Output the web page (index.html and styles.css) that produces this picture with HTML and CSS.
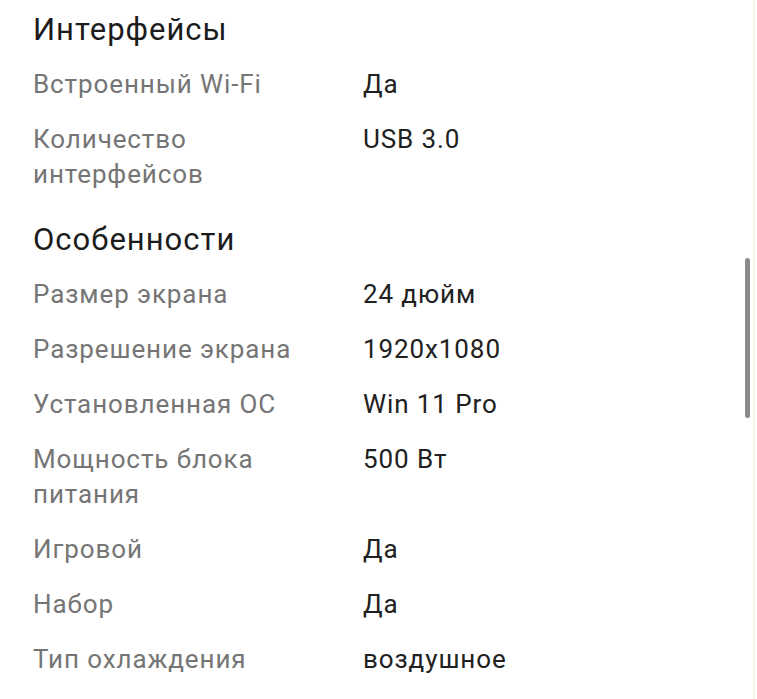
FILE: index.html
```html
<!DOCTYPE html>
<html lang="ru">
<head>
<meta charset="utf-8">
<link rel="stylesheet" href="styles.css">
</head>
<body>
<div class="page">
  <section class="group first">
    <h2 class="title">Интерфейсы</h2>
    <div class="row"><div class="label">Встроенный Wi-Fi</div><div class="value">Да</div></div>
    <div class="row"><div class="label">Количество<br>интерфейсов</div><div class="value">USB 3.0</div></div>
  </section>
  <section class="group">
    <h2 class="title">Особенности</h2>
    <div class="row"><div class="label">Размер экрана</div><div class="value">24 дюйм</div></div>
    <div class="row"><div class="label">Разрешение экрана</div><div class="value">1920x1080</div></div>
    <div class="row"><div class="label">Установленная ОС</div><div class="value">Win 11 Pro</div></div>
    <div class="row"><div class="label">Мощность блока<br>питания</div><div class="value">500 Вт</div></div>
    <div class="row"><div class="label">Игровой</div><div class="value">Да</div></div>
    <div class="row"><div class="label">Набор</div><div class="value">Да</div></div>
    <div class="row"><div class="label">Тип охлаждения</div><div class="value">воздушное</div></div>
  </section>
  <div class="scrollbar"></div>
</div>
</body>
</html>
```

FILE: styles.css
```css
html, body {
  margin: 0;
  padding: 0;
  background: #ffffff;
}
body {
  font-family: Roboto, "Noto Sans", sans-serif;
  overflow: hidden;
}
.page {
  position: relative;
  width: 755px;
  height: 699px;
  border-right: 2px solid #f3faea;
  padding: 12px 0 0 33px;
  box-sizing: border-box;
}
.group {
  display: flex;
  flex-direction: column;
}
.group + .group {
  margin-top: 20px;
}
.title {
  margin: 0 0 9px 0;
  font-size: 31px;
  line-height: 36px;
  font-weight: 400;
  letter-spacing: 1px;
  color: #1c1c1c;
}
.row {
  display: grid;
  grid-template-columns: 330px 1fr;
  padding: 10px 0;
  font-size: 26px;
  line-height: 35px;
  letter-spacing: 0.9px;
}
.label {
  color: #757575;
}
.value {
  color: #212121;
}
.scrollbar {
  position: absolute;
  right: 3px;
  top: 258px;
  width: 5px;
  height: 160px;
  border-radius: 3px;
  background: #8a8a8a;
}
```
